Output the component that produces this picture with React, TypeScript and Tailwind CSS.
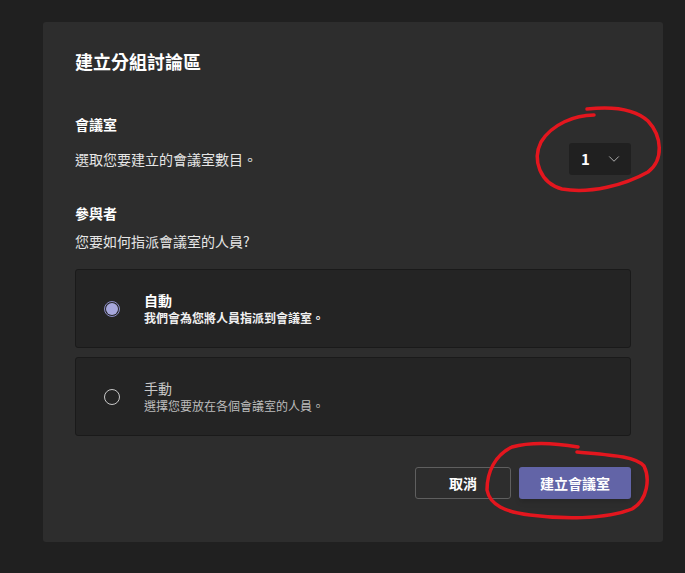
import { ChevronDown } from 'lucide-react';

type Option = {
  title: string;
  hint: string;
  checked: boolean;
};

const options: Option[] = [
  { title: '自動', hint: '我們會為您將人員指派到會議室。', checked: true },
  { title: '手動', hint: '選擇您要放在各個會議室的人員。', checked: false },
];

function Radio({ checked }: { checked: boolean }) {
  if (checked) {
    return (
      <span className="w-4 h-4 rounded-full border border-[#8b8cc7] flex items-center justify-center shrink-0">
        <span className="w-3 h-3 rounded-full bg-[#a6a7dc]" />
      </span>
    );
  }
  return <span className="w-4 h-4 rounded-full border border-[#c8c8c8] shrink-0" />;
}

// hand-drawn red marks over the screenshot
function Scribbles() {
  return (
    <svg className="absolute inset-0 pointer-events-none" width="685" height="573" viewBox="0 0 685 573">
      <path
        d="M594 115 C575 115 552 124 541 142 C532 160 540 183 562 189 C590 194 625 185 648 172 C664 160 662 136 648 121 C636 110 614 106 587 109"
        fill="none"
        stroke="#e3161e"
        strokeWidth="3.5"
        strokeLinecap="round"
      />
      <path
        d="M578 447 C555 443 530 442 512 447 C495 455 487 472 487 490 C490 505 505 512 530 515 C560 519 605 520 632 509 C648 500 650 478 644 466 C635 456 610 455 577 452"
        fill="none"
        stroke="#e3161e"
        strokeWidth="3.5"
        strokeLinecap="round"
      />
    </svg>
  );
}

export default function App() {
  return (
    <div
      className="relative w-[685px] h-[573px] bg-[#202020] overflow-hidden pt-[22px] pl-[43px]"
      style={{ fontFamily: '"Noto Sans CJK TC", "Noto Sans", sans-serif' }}
    >
      <div className="w-[620px] h-[520px] bg-[#2d2d2d] rounded-[3px] px-8 pt-[26px] flex flex-col text-white">
        <h1 className="text-[18px] font-bold leading-[26px]">建立分組討論區</h1>

        <div className="mt-[40px] text-[14px] font-bold leading-5">會議室</div>
        <div className="mt-[9px] flex items-center justify-between">
          <div className="text-[14px] leading-5 text-[#e6e6e6]">選取您要建立的會議室數目。</div>
          <button className="w-[62px] h-8 rounded-[3px] bg-[#202020] flex items-center justify-between pl-[12px] pr-[8px]">
            <span className="text-[15px] font-bold">1</span>
            <ChevronDown size={18} strokeWidth={1.25} className="text-[#b5b5b5]" />
          </button>
        </div>

        <div className="mt-[28px] text-[14px] font-bold leading-5">參與者</div>
        <div className="mt-2 text-[14px] leading-5 text-[#e6e6e6]">您要如何指派會議室的人員?</div>

        <div className="mt-[18px] flex flex-col gap-[9px]">
          {options.map((o) => (
            <div
              key={o.title}
              className="h-[79px] rounded-[3px] border border-[#1a1a1a] bg-[#242424] flex items-center pl-[28px]"
            >
              <Radio checked={o.checked} />
              <div className="ml-[24px] -mt-[2px]">
                <div
                  className={
                    o.checked
                      ? 'text-[14px] font-bold leading-5 text-white'
                      : 'text-[14px] leading-5 text-[#c8c8c8]'
                  }
                >
                  {o.title}
                </div>
                <div
                  className={
                    o.checked
                      ? 'text-[12px] font-semibold leading-4 text-[#f0f0f0]'
                      : 'text-[12px] leading-4 text-[#bdbdbd]'
                  }
                >
                  {o.hint}
                </div>
              </div>
            </div>
          ))}
        </div>

        <div className="mt-[31px] flex justify-end gap-2">
          <button className="w-[96px] h-8 rounded-[3px] border border-[#5f5f5f] text-[14px] font-bold">取消</button>
          <button className="w-[112px] h-8 rounded-[3px] bg-[#6264a7] text-[14px] font-bold shadow-md">建立會議室</button>
        </div>
      </div>
      <Scribbles />
    </div>
  );
}
